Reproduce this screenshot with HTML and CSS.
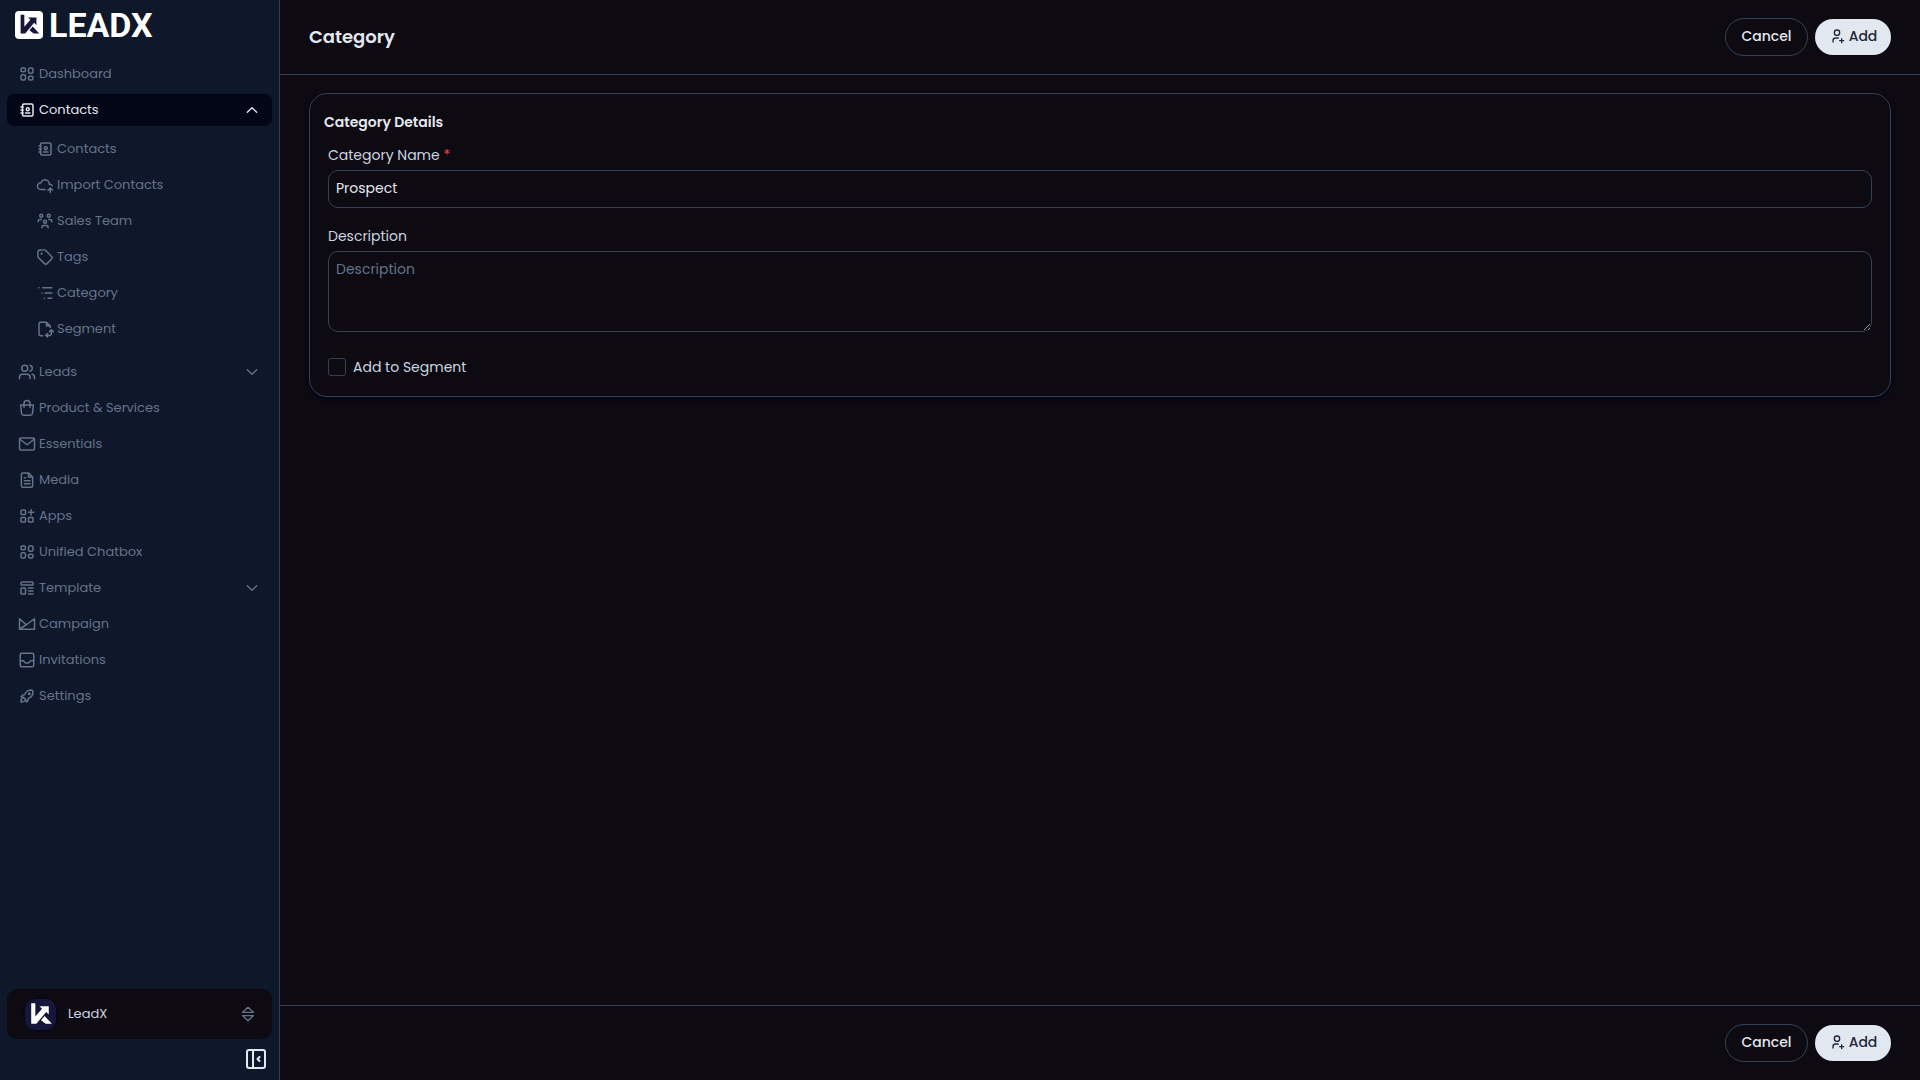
FILE: index.html
```html
<!DOCTYPE html>
<html lang="en">
<head>
  <meta charset="UTF-8">
  <meta name="viewport" content="width=device-width, initial-scale=1.0">
  <title>Category - LeadX</title>
  <link rel="stylesheet" href="styles.css">
</head>
<body>
  <!-- Icon set -->
  <svg class="sprite" aria-hidden="true">
    <symbol id="i-widgets" viewBox="0 0 24 24">
      <rect x="4" y="4" width="6" height="5" rx="2"/><rect x="14" y="4" width="6" height="7" rx="2"/>
      <rect x="4" y="13" width="6" height="7" rx="2"/><rect x="14" y="15" width="6" height="5" rx="2"/>
    </symbol>
    <symbol id="i-contacts" viewBox="0 0 24 24">
      <path d="M20 6v12a2 2 0 0 1-2 2H8a2 2 0 0 1-2-2V6a2 2 0 0 1 2-2h10a2 2 0 0 1 2 2zM10 16h6M11 11a2 2 0 1 0 4 0a2 2 0 1 0-4 0M4 8h3M4 12h3M4 16h3"/>
    </symbol>
    <symbol id="i-cloud" viewBox="0 0 24 24">
      <path d="M12 18H6.7C4.1 18 2 16 2 13.5S4.1 9 6.7 9c.4-1.700 1.800-3.200 3.600-3.700c1.900-.6 4-.2 5.500 1c1.500 1.200 2.100 3 1.700 4.700h1c1.400 0 2.600.8 3.100 2M19 22v-6M22 19l-3-3l-3 3"/>
    </symbol>
    <symbol id="i-team" viewBox="0 0 24 24">
      <path d="M10 13a2 2 0 1 0 4 0a2 2 0 0 0-4 0M8 21v-1a2 2 0 0 1 2-2h4a2 2 0 0 1 2 2v1M15 5a2 2 0 1 0 4 0a2 2 0 0 0-4 0M17 10h2a2 2 0 0 1 2 2v1M5 5a2 2 0 1 0 4 0a2 2 0 0 0-4 0M3 13v-1a2 2 0 0 1 2-2h2"/>
    </symbol>
    <symbol id="i-tag" viewBox="0 0 24 24">
      <path d="M7 7.500a.5.5 0 1 0 1 0a.5.5 0 1 0-1 0M2.500 5.500v5.700a2 2 0 0 0 .6 1.400l8.200 8.200a2.400 2.400 0 0 0 3.400 0l6.100-6.100a2.400 2.400 0 0 0 0-3.400l-8.200-8.200a2 2 0 0 0-1.400-.6H5.500a3 3 0 0 0-3 3z"/>
    </symbol>
    <symbol id="i-list" viewBox="0 0 24 24">
      <path d="M9 5h12M12 12h9M16 19h5M4 5v.01M8 12v.01M11 19v.01"/>
    </symbol>
    <symbol id="i-segment" viewBox="0 0 24 24">
      <path d="M9 21H6a2 2 0 0 1-2-2V5a2 2 0 0 1 2-2h8l5 5v2M14 3v5h5M15.500 22.500L13 20.500l2.500-2.500M15.500 20.500h2a3 3 0 0 0 3-3v-3M18 15.500l2.500-2.500L23 15.500"/>
    </symbol>
    <symbol id="i-users" viewBox="0 0 24 24">
      <path d="M16 21v-2a4 4 0 0 0-4-4H6a4 4 0 0 0-4 4v2M22 21v-2a4 4 0 0 0-3-3.870M16 3.130a4 4 0 0 1 0 7.750"/><circle cx="9" cy="7" r="4"/>
    </symbol>
    <symbol id="i-bag" viewBox="0 0 24 24">
      <path d="M3.500 8h17l-1.200 11a3 3 0 0 1-3 2.600H7.700a3 3 0 0 1-3-2.600zM8 11V6a4 4 0 0 1 8 0v5"/>
    </symbol>
    <symbol id="i-mail" viewBox="0 0 24 24">
      <rect x="2" y="4" width="20" height="16" rx="2"/><path d="M3 6l9 7l9-7"/>
    </symbol>
    <symbol id="i-file" viewBox="0 0 24 24">
      <path d="M14 2.500V8h5.500M17.500 21.500h-11a2 2 0 0 1-2-2v-15a2 2 0 0 1 2-2H14L19.500 8v11.500a2 2 0 0 1-2 2zM8.500 9h1.500M8.500 13h7.500M8.500 17h7.500"/>
    </symbol>
    <symbol id="i-apps" viewBox="0 0 24 24">
      <rect x="4" y="4" width="6" height="6" rx="1"/><rect x="4" y="14" width="6" height="6" rx="1"/><rect x="14" y="14" width="6" height="6" rx="1"/><path d="M14 7h7M17.500 3.500v7"/>
    </symbol>
    <symbol id="i-template" viewBox="0 0 24 24">
      <rect x="4" y="4" width="16" height="4" rx="1"/><rect x="4" y="12" width="6" height="8" rx="1"/><path d="M14 12h6M14 16h6M14 20h6"/>
    </symbol>
    <symbol id="i-campaign" viewBox="0 0 24 24">
      <path d="M2 5v14h20V5l-11 8zM2.500 18.500L11 13"/>
    </symbol>
    <symbol id="i-inbox" viewBox="0 0 24 24">
      <rect x="3" y="3" width="18" height="18" rx="2"/><path d="M3 13h4l3 3h4l3-3h4"/>
    </symbol>
    <symbol id="i-rocket" viewBox="0 0 24 24">
      <path d="M4 13a8 8 0 0 1 7 7a6 6 0 0 0 3-5a9 9 0 0 0 6-8a3 3 0 0 0-3-3a9 9 0 0 0-8 6a6 6 0 0 0-5 3M7 14a6 6 0 0 0-3 6a6 6 0 0 0 6-3"/><circle cx="15" cy="9" r="1"/>
    </symbol>
    <symbol id="i-down" viewBox="0 0 24 24"><path d="M5 8.500l7 7l7-7"/></symbol>
    <symbol id="i-up" viewBox="0 0 24 24"><path d="M5 15.500l7-7l7 7"/></symbol>
    <symbol id="i-selector" viewBox="0 0 24 24"><path d="M4 9.500L12 2l8 7.500zM4 14.500h16L12 22z"/></symbol>
    <symbol id="i-collapse" viewBox="0 0 24 24"><rect x="3" y="3" width="18" height="18" rx="2"/><path d="M9 3v18M15.500 10l-2 2l2 2"/></symbol>
    <symbol id="i-user-plus" viewBox="0 0 24 24">
      <circle cx="12" cy="7" r="4"/><path d="M16 19h6M19 16v6M6 21v-2a4 4 0 0 1 4-4h4"/>
    </symbol>
    <symbol id="i-mark" viewBox="0 0 30 30">
      <path d="M6 4h4v13l6.500-7.500L14 7h9v8l-2.500-2.500L11 24H6zM15.500 20.500l3.500-4l7 7.500h-6z"/>
    </symbol>
  </svg>

  <div class="app">
    <aside class="sidebar">
      <a class="logo" href="#">
        <svg class="logo-mark"><use href="#i-mark"/></svg>
        <span>LEADX</span>
      </a>

      <nav class="nav">
        <a class="nav-item" href="#"><svg class="icon"><use href="#i-widgets"/></svg>Dashboard</a>
        <button class="nav-item active" type="button" aria-expanded="true"><svg class="icon"><use href="#i-contacts"/></svg>Contacts<svg class="chevron"><use href="#i-up"/></svg></button>
        <div class="subnav">
          <a class="nav-item" href="#"><svg class="icon"><use href="#i-contacts"/></svg>Contacts</a>
          <a class="nav-item" href="#"><svg class="icon"><use href="#i-cloud"/></svg>Import Contacts</a>
          <a class="nav-item" href="#"><svg class="icon"><use href="#i-team"/></svg>Sales Team</a>
          <a class="nav-item" href="#"><svg class="icon"><use href="#i-tag"/></svg>Tags</a>
          <a class="nav-item" href="#"><svg class="icon"><use href="#i-list"/></svg>Category</a>
          <a class="nav-item" href="#"><svg class="icon"><use href="#i-segment"/></svg>Segment</a>
        </div>
        <button class="nav-item" type="button" aria-expanded="false"><svg class="icon"><use href="#i-users"/></svg>Leads<svg class="chevron"><use href="#i-down"/></svg></button>
        <a class="nav-item" href="#"><svg class="icon"><use href="#i-bag"/></svg>Product &amp; Services</a>
        <a class="nav-item" href="#"><svg class="icon"><use href="#i-mail"/></svg>Essentials</a>
        <a class="nav-item" href="#"><svg class="icon"><use href="#i-file"/></svg>Media</a>
        <a class="nav-item" href="#"><svg class="icon"><use href="#i-apps"/></svg>Apps</a>
        <a class="nav-item" href="#"><svg class="icon"><use href="#i-widgets"/></svg>Unified Chatbox</a>
        <button class="nav-item" type="button" aria-expanded="false"><svg class="icon"><use href="#i-template"/></svg>Template<svg class="chevron"><use href="#i-down"/></svg></button>
        <a class="nav-item" href="#"><svg class="icon"><use href="#i-campaign"/></svg>Campaign</a>
        <a class="nav-item" href="#"><svg class="icon"><use href="#i-inbox"/></svg>Invitations</a>
        <a class="nav-item" href="#"><svg class="icon"><use href="#i-rocket"/></svg>Settings</a>
      </nav>

      <div class="sidebar-footer">
        <button class="account" type="button">
          <span class="avatar"><svg class="avatar-mark"><use href="#i-mark"/></svg></span>
          LeadX
          <svg class="selector"><use href="#i-selector"/></svg>
        </button>
        <button class="collapse" type="button" aria-label="Collapse sidebar"><svg><use href="#i-collapse"/></svg></button>
      </div>
    </aside>

    <main class="main">
      <header class="bar">
        <h1>Category</h1>
        <div class="actions">
          <button class="btn btn-outline" type="button">Cancel</button>
          <button class="btn btn-primary" type="submit" form="category-form"><svg><use href="#i-user-plus"/></svg>Add</button>
        </div>
      </header>

      <div class="content">
        <form class="card" id="category-form">
          <h2>Category Details</h2>
          <div class="fields">
            <div class="form-group">
              <label for="category-name">Category Name <span class="required">*</span></label>
              <input type="text" id="category-name" value="Prospect" required>
            </div>
            <div class="form-group">
              <label for="description">Description</label>
              <textarea id="description" placeholder="Description"></textarea>
            </div>
            <div class="check">
              <input type="checkbox" id="segment">
              <label for="segment">Add to Segment</label>
            </div>
          </div>
        </form>
      </div>

      <footer class="bar bar-bottom">
        <div class="actions">
          <button class="btn btn-outline" type="button">Cancel</button>
          <button class="btn btn-primary" type="submit" form="category-form"><svg><use href="#i-user-plus"/></svg>Add</button>
        </div>
      </footer>
    </main>
  </div>
</body>
</html>
```
FILE: styles.css
```css
* {
  box-sizing: border-box;
}
body {
  margin: 0;
  background-color: #0d0a11;
  color: #e2e8f0;
  font-family: Poppins, Inter, sans-serif;
  font-size: 14px;
  line-height: 20px;
}
button, input, textarea {
  font: inherit;
  color: inherit;
}
button {
  cursor: pointer;
}
svg {
  flex: none;
  fill: none;
  stroke: currentColor;
  stroke-width: 2;
  stroke-linecap: round;
  stroke-linejoin: round;
}
.sprite {
  display: none;
}
.app {
  display: flex;
  min-height: 100vh;
}

/* Sidebar */
.sidebar {
  display: flex;
  flex-direction: column;
  flex: none;
  width: 280px;
  padding: 9px 7px;
  background-color: #0f172a;
  border-right: 1px solid #334155;
}
.logo {
  display: flex;
  align-items: center;
  gap: 6px;
  height: 32px;
  margin-bottom: 17px;
  padding-left: 8px;
  color: #fff;
  font-family: Roboto, sans-serif;
  font-size: 34px;
  font-weight: 700;
  text-decoration: none;
}
.logo-mark {
  width: 28px;
  height: 28px;
  border-radius: 4px;
  background-color: #fff;
  fill: #16163a;
  stroke: none;
}
.nav {
  display: flex;
  flex-direction: column;
  gap: 4px;
}
.nav-item {
  display: flex;
  align-items: center;
  gap: 3px;
  width: 100%;
  height: 32px;
  padding: 0 12px 0 11px;
  border: none;
  border-radius: 7px;
  background: none;
  color: #64748b;
  font-size: 13px;
  text-decoration: none;
}
.nav-item.active {
  background-color: #020617;
  color: #e2e8f0;
}
.icon {
  width: 18px;
  height: 18px;
}
.chevron {
  width: 16px;
  height: 16px;
  margin-left: auto;
}
.subnav {
  display: flex;
  flex-direction: column;
  gap: 4px;
  padding: 3px 0 7px 18px;
}
.sidebar-footer {
  display: flex;
  flex-direction: column;
  align-items: flex-end;
  gap: 8px;
  margin-top: auto;
}
.account {
  display: flex;
  align-items: center;
  gap: 10px;
  width: 100%;
  height: 50px;
  padding: 0 16px;
  border: none;
  border-radius: 10px;
  background-color: #0d0a11;
  color: #cbd5e1;
  font-size: 13px;
}
.avatar {
  display: flex;
  align-items: center;
  justify-content: center;
  width: 35px;
  height: 35px;
  border-radius: 50%;
  background-color: #020617;
}
.avatar-mark {
  width: 31px;
  height: 31px;
  border-radius: 10px;
  background-color: #16163a;
  fill: #fff;
  stroke: none;
}
.selector {
  width: 16px;
  height: 16px;
  margin-left: auto;
  color: #64748b;
}
.collapse {
  display: flex;
  margin-right: 4px;
  padding: 0;
  border: none;
  background: none;
}
.collapse svg {
  width: 24px;
  height: 24px;
}

/* Main area */
.main {
  display: flex;
  flex: 1;
  flex-direction: column;
  min-width: 0;
}
.bar {
  display: flex;
  align-items: center;
  height: 75px;
  padding: 0 29px;
  border-bottom: 1px solid #334155;
}
.bar-bottom {
  border-top: 1px solid #334155;
  border-bottom: none;
}
h1 {
  margin: 0;
  font-size: 18px;
  font-weight: 600;
}
.actions {
  display: flex;
  align-items: center;
  gap: 7px;
  margin-left: auto;
}
.btn {
  display: flex;
  align-items: center;
  justify-content: center;
  gap: 4px;
  height: 36px;
  padding: 0 6px 2px;
  border: none;
  border-radius: 18px;
  font-size: 14px;
  font-weight: 500;
}
.btn-outline {
  width: 83px;
  height: 38px;
  border: 1px solid #334155;
  border-radius: 19px;
  background: none;
}
.btn-primary {
  width: 76px;
  background-color: #e2e8f0;
  color: #1e293b;
}
.btn svg {
  width: 16px;
  height: 16px;
}
.content {
  flex: 1;
  padding: 18px 29px;
}
.card {
  padding: 18px 14px 19px;
  border: 1px solid #334155;
  border-radius: 18px;
  box-shadow: 0 2px 4px #020617;
}
h2 {
  margin: 0 0 13px;
  font-size: 14px;
  font-weight: 600;
  line-height: 20px;
}
.fields {
  display: flex;
  flex-direction: column;
  gap: 18px;
  padding: 0 4px;
}
.form-group {
  display: flex;
  flex-direction: column;
  gap: 5px;
}
label {
  color: #cbd5e1;
}
.required {
  color: #ef4444;
}
input[type="text"], textarea {
  display: block;
  width: 100%;
  padding: 7px 7px 9px;
  border: 1px solid #334155;
  border-radius: 10px;
  background: none;
}
input[type="text"] {
  height: 38px;
}
textarea {
  height: 81px;
  resize: vertical;
}
textarea::placeholder {
  color: #64748b;
}
.check {
  display: flex;
  align-items: center;
  gap: 7px;
  margin-top: 7px;
}
input[type="checkbox"] {
  appearance: none;
  width: 18px;
  height: 18px;
  margin: 0;
  border: 1px solid #334155;
  border-radius: 3px;
}
```
